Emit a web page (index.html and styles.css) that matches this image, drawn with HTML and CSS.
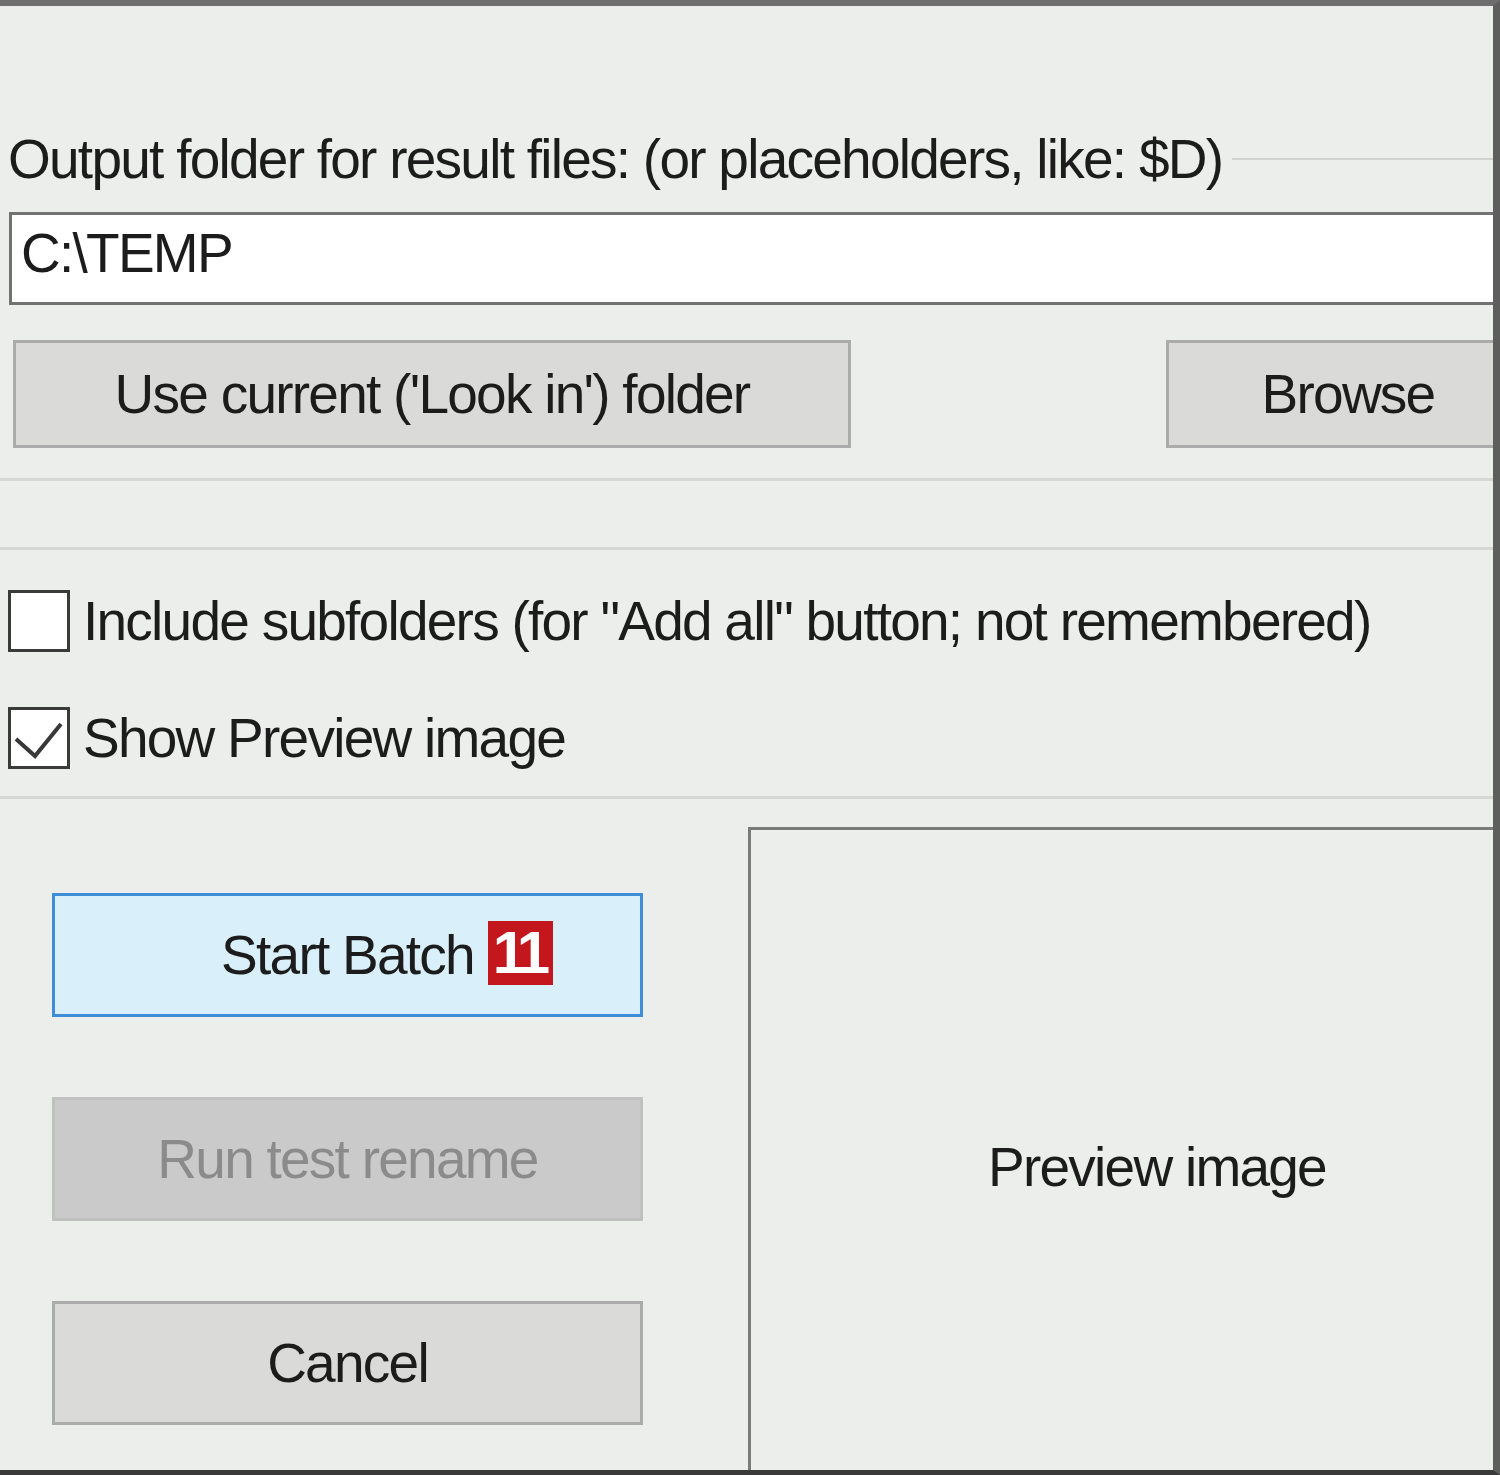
FILE: index.html
```html
<!DOCTYPE html>
<html>
<head>
	<link rel="stylesheet" href="styles.css">
</head>

<body>

	<div class="window">
		<div class="group-head">
			<span class="group-title">Output folder for result files: (or placeholders, like: $D)</span>
			<span class="group-rule"></span>
		</div>
		<div class="path-box">C:\TEMP</div>
		<div class="folder-actions">
			<button class="btn btn-wide">Use current ('Look in') folder</button>
			<button class="btn btn-browse">Browse</button>
		</div>

		<div class="rule rule-a"></div>
		<div class="rule rule-b"></div>

		<label class="check-row first">
			<span class="check-box"></span>
			<span class="check-text">Include subfolders (for "Add all" button; not remembered)</span>
		</label>
		<label class="check-row second">
			<span class="check-box">
				<svg width="56" height="56" viewBox="0 0 56 56"><polyline points="5,29 24,46 50,14" fill="none" stroke="#383838" stroke-width="4"/></svg>
			</span>
			<span class="check-text">Show Preview image</span>
		</label>

		<div class="rule rule-c"></div>

		<div class="lower">
			<div class="actions">
				<button class="btn btn-start">Start Batch<span class="badge">11</span></button>
				<button class="btn btn-disabled">Run test rename</button>
				<button class="btn btn-cancel">Cancel</button>
			</div>
			<div class="preview">
				<span>Preview image</span>
			</div>
		</div>
	</div>

</body>
</html>
```

FILE: styles.css
```css
html, body {
	margin:0;
	background-color:#eceeeb;
}
body {
	font-family:"Liberation Sans", Arial, sans-serif;
	font-size:55px;
	letter-spacing:-1.75px;
	color:#1c1c1c;
}
.window {
	box-sizing:border-box;
	width:1500px;
	height:1475px;
	border-top:6px solid #6e6e6e;
	border-right:7px solid #5e5e5e;
	border-bottom:5px solid #3a3a3a;
	overflow:hidden;
	display:flex;
	flex-direction:column;
}
.group-head {
	display:flex;
	align-items:center;
	margin-top:118px;
	height:70px;
	padding-left:8px;
}
.group-title {
	line-height:70px;
	white-space:nowrap;
}
.group-rule {
	flex:1;
	height:2px;
	margin-left:10px;
	background-color:#d2d3d1;
}
.path-box {
	box-sizing:border-box;
	margin-top:18px;
	margin-left:9px;
	height:93px;
	padding-top:3px;
	padding-left:9px;
	line-height:70px;
	background-color:white;
	border:3px solid #727272;
	border-right:none;
}
.folder-actions {
	display:flex;
	justify-content:space-between;
	margin-top:35px;
	padding-left:13px;
}
.btn {
	box-sizing:border-box;
	font-family:inherit;
	font-size:inherit;
	letter-spacing:inherit;
	color:inherit;
	background-color:#dadbd9;
	border:3px solid #ababab;
	padding:0;
	margin:0;
	text-align:center;
}
.btn-wide {
	width:838px;
	height:108px;
}
.btn-browse {
	width:327px;
	height:108px;
	border-right:none;
	padding-left:34px;
}
.rule {
	height:3px;
	background-color:#d6d7d4;
}
.rule-a {
	margin-top:30px;
}
.rule-b {
	margin-top:66px;
}
.check-row {
	display:flex;
	align-items:center;
	height:62px;
	padding-left:8px;
}
.check-row.first {
	margin-top:40px;
}
.check-row.second {
	margin-top:55px;
}
.check-box {
	box-sizing:border-box;
	width:62px;
	height:62px;
	border:3px solid #3a3a3a;
	background-color:white;
}
.check-box svg {
	display:block;
}
.check-text {
	margin-left:13px;
	line-height:70px;
	white-space:nowrap;
}
.rule-c {
	margin-top:27px;
}
.lower {
	flex:1;
	display:flex;
	margin-top:28px;
}
.actions {
	display:flex;
	flex-direction:column;
	gap:80px;
	width:591px;
	padding-left:52px;
	padding-top:66px;
}
.actions .btn {
	height:124px;
}
.btn-start {
	position:relative;
	background-color:#d9effa;
	border-color:#3d8ed6;
}
.badge {
	position:absolute;
	left:433px;
	top:25px;
	width:65px;
	height:64px;
	padding-right:4px;
	box-sizing:border-box;
	background-color:#c3171d;
	color:white;
	font-weight:bold;
	font-size:60px;
	letter-spacing:-6px;
	line-height:64px;
	text-align:center;
}
.btn-disabled {
	background-color:#cacaca;
	border-color:#c0c0c0;
	color:#8b8b8b;
}
.preview {
	flex:1;
	display:flex;
	align-items:center;
	justify-content:center;
	margin-left:105px;
	padding-left:70px;
	padding-top:34px;
	border-top:3px solid #7a7a7a;
	border-left:3px solid #7a7a7a;
}
```
